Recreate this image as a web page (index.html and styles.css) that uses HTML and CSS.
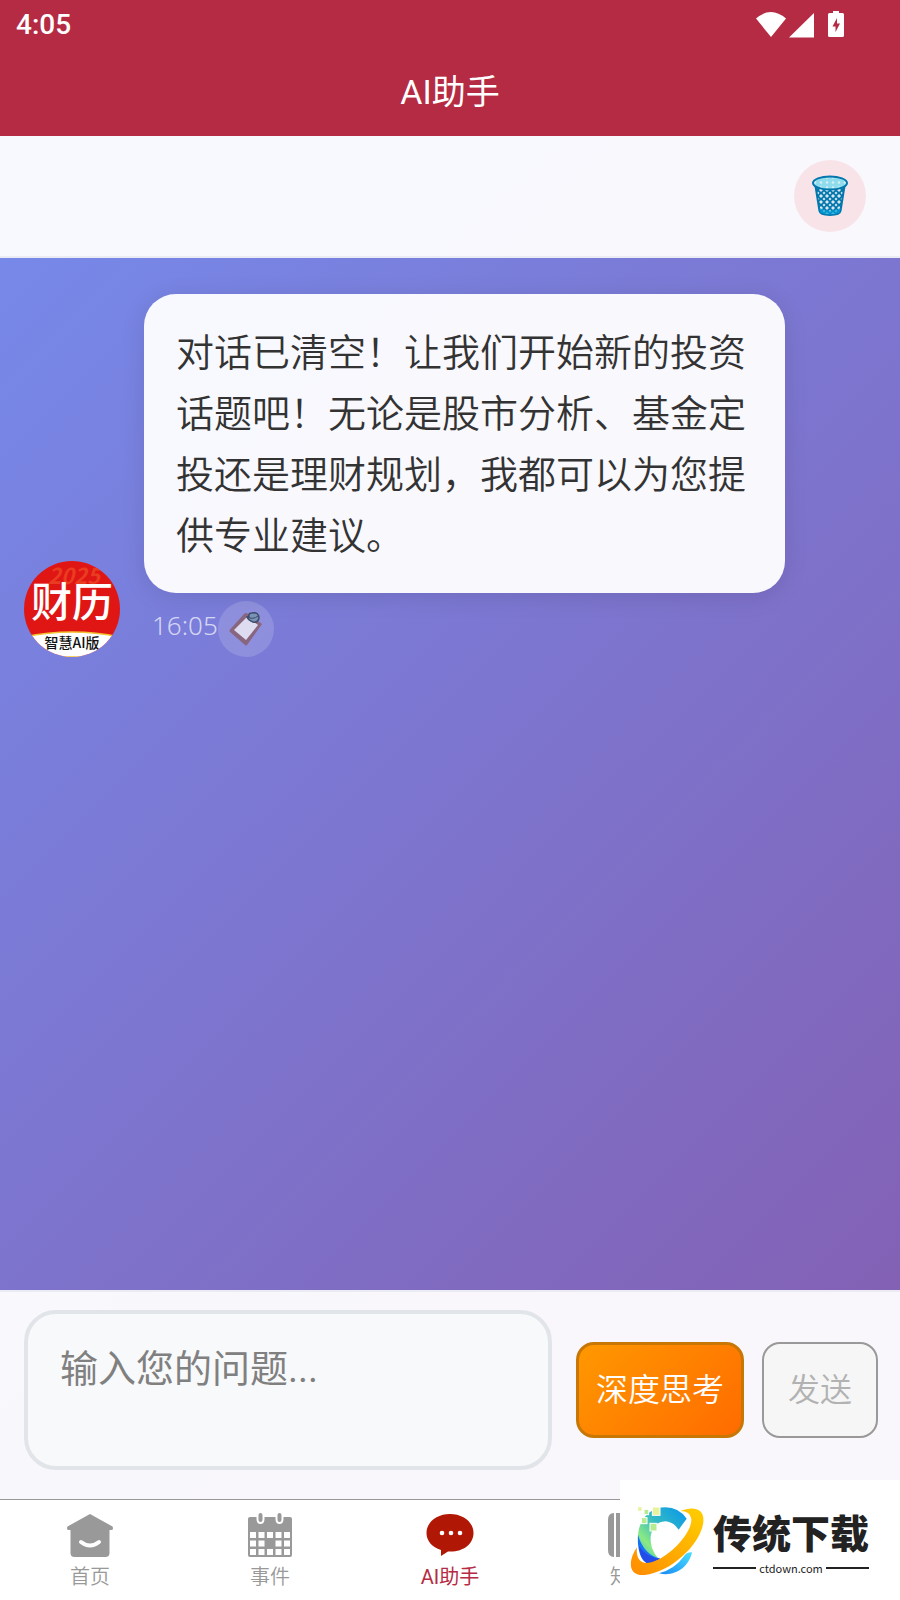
FILE: index.html
```html
<!DOCTYPE html>
<html lang="zh-CN">
<head>
  <meta charset="UTF-8">
  <meta name="viewport" content="width=device-width, initial-scale=1.0">
  <title>AI助手</title>
  <link rel="stylesheet" href="styles.css">
</head>
<body>

  <header class="header">
    <div class="status-bar">
      <span>4:05</span>
      <svg class="status-icons" width="90" height="28" viewBox="0 0 90 28" fill="#fff">
        <path d="M0 7.500Q15-5.500 30 7.500L15 26Z"/>
        <path d="M33 26.500L58 2V26.500Z"/>
        <path fill-rule="evenodd" d="M77 0h6v2h3.500q1.500 0 1.500 1.500v21q0 1.500-1.500 1.500h-13q-1.500 0-1.500-1.500v-21q0-1.500 1.500-1.500H77ZM81 7l-4.500 8.500h3V21l4.500-8.500h-3Z"/>
      </svg>
    </div>
    <h1 class="title">AI助手</h1>
  </header>

  <main class="page">
    <div class="toolbar">
      <button type="button" class="clear-button" aria-label="清空对话">
        <svg width="36" height="42" viewBox="0 0 36 42">
          <defs>
            <pattern id="mesh" width="6" height="6" patternUnits="userSpaceOnUse">
              <rect width="6" height="6" fill="#0277ad"/>
              <path d="M3 1L5 3L3 5L1 3Z" fill="#d9e6ee"/>
              <path d="M0-1.500L1.500 0L0 1.500ZM6-1.500V1.500L4.500 0ZM0 4.500L1.500 6L0 7.500ZM6 4.500V7.500L4.500 6Z" fill="#d9e6ee"/>
            </pattern>
            <pattern id="rim" width="6" height="5" patternUnits="userSpaceOnUse">
              <rect width="6" height="5" fill="#8fdcec"/>
              <circle cx="3" cy="2.500" r="1.300" fill="#d5eff4"/>
            </pattern>
          </defs>
          <path d="M3.500 11L7.500 36Q8 40 18 40Q28 40 28.500 36L32.500 11Z" fill="url(#mesh)" stroke="#0277ad" stroke-width="2"/>
          <path d="M7.500 33Q18 38 28.500 33L28 37Q25 39.500 18 39.500Q11 39.500 8 37Z" fill="#00a0da" opacity=".7"/>
          <ellipse cx="18" cy="8" rx="17" ry="6.500" fill="url(#rim)" stroke="#0277ad" stroke-width="2"/>
        </svg>
      </button>
    </div>

    <section class="chat">
      <article class="message">
        <svg class="avatar" viewBox="0 0 96 96">
          <clipPath id="round"><circle cx="48" cy="48" r="48"/></clipPath>
          <g clip-path="url(#round)">
            <rect width="96" height="96" fill="#e01615"/>
            <text x="50" y="23" class="avatar-year">2025</text>
            <path d="M0 76Q48 66 96 76V96H0Z" fill="#fff" stroke="#f2c230" stroke-width="1.500"/>
            <text x="48" y="56" class="avatar-name">财历</text>
            <text x="48" y="87" class="avatar-note">智慧AI版</text>
          </g>
        </svg>
        <div class="message-body">
          <p class="bubble">对话已清空！让我们开始新的投资话题吧！无论是股市分析、基金定投还是理财规划，我都可以为您提供专业建议。</p>
          <div class="meta">
            <time>16:05</time>
            <button type="button" class="copy-button" aria-label="复制">
              <svg width="34" height="34" viewBox="0 0 34 34">
                <path d="M17.500 1L33 12L18 33Q17 34 16 33L1 20Q0 19 1 17.500L15 2Q16 1 17.500 1Z" fill="#88667f"/>
                <path d="M18 5L29 13L17 28L5 18Z" fill="#dedcf1"/>
                <path d="M20 5Q19 1 23 1Q30 0 30 6Q29 11 24 10Q19 8 18 5Z" fill="#7893b5" stroke="#3e4b6a" stroke-width="1.500"/>
                <path d="M18 5Q24 8 29 4" fill="none" stroke="#3e4b6a"/>
              </svg>
            </button>
          </div>
        </div>
      </article>
    </section>

    <form class="composer">
      <textarea class="question" aria-label="输入您的问题" placeholder="输入您的问题..."></textarea>
      <button type="button" class="button think-button">深度思考</button>
      <button type="button" class="button send-button" disabled>发送</button>
    </form>
  </main>

  <nav class="tabs">
    <a href="#" class="tab">
      <svg width="48" height="48" viewBox="0 0 48 48">
        <path d="M24 3L46.500 15.500Q48 19 45 19H43.500V42Q43.500 46 39.500 46H8.500Q4.500 46 4.500 42V19H3Q0 19 1.500 15.500Z" fill="#999"/>
        <path d="M15 31Q24 38 33 31" fill="none" stroke="#fff" stroke-width="4" stroke-linecap="round"/>
      </svg>
      首页
    </a>
    <a href="#" class="tab">
      <svg width="48" height="48" viewBox="0 0 48 48">
        <path d="M4 6H44Q46 6 46 8V44Q46 46 44 46H4Q2 46 2 44V8Q2 6 4 6Z" fill="#999"/>
        <path d="M10.500 5V8Q10.500 13 14.500 13Q18.500 13 18.500 8V5ZM29.500 5V8Q29.500 13 33.500 13Q37.500 13 37.500 8V5Z" fill="#fff"/>
        <path d="M14.500 4V9M33.500 4V9" stroke="#999" stroke-width="4" stroke-linecap="round"/>
        <path d="M4 21h6v6H4zM12.500 21h6v6h-6zM21 21h6v6h-6zM29.500 21h6v6h-6zM38 21h6v6h-6zM4 29.500h6v6H4zM12.500 29.500h6v6h-6zM29.500 29.500h6v6h-6zM38 29.500h6v6h-6zM4 38h6v6H4zM12.500 38h6v6h-6zM21 38h6v6h-6zM29.500 38h6v6h-6zM38 38h6v6h-6z" fill="#fff"/>
      </svg>
      事件
    </a>
    <a href="#" class="tab tab-active">
      <svg width="48" height="48" viewBox="0 0 48 48">
        <path d="M24 3C37 3 47.500 11 47.500 22C47.500 33 37 41.500 22 40.500L15 45V39C6 36 .5 30 .5 22C.5 11 11 3 24 3Z" fill="#b01805"/>
        <g fill="#fff"><circle cx="16" cy="22" r="2.300"/><circle cx="25" cy="22" r="2.300"/><circle cx="34" cy="22" r="2.300"/></g>
      </svg>
      AI助手
    </a>
    <a href="#" class="tab">
      <svg width="48" height="48" viewBox="0 0 48 48" fill="#999">
        <path d="M8 2V46Q2 46 2 39V9Q2 2 8 2ZM10 2H46V46H10Z"/>
        <path d="M9 2V46" stroke="#fff" stroke-width="2"/>
      </svg>
      知识
    </a>
    <span class="tab"></span>
  </nav>

  <aside class="watermark">
    <svg width="80" height="75" viewBox="50 95 240 225">
      <defs>
        <linearGradient id="gold" x1="1" y1="0" x2="0" y2="1"><stop stop-color="#ffcf00"/><stop offset="1" stop-color="#ff8b00"/></linearGradient>
        <linearGradient id="arc" x1="1" y1="0" x2="0" y2="1"><stop stop-color="#0795ed"/><stop offset=".45" stop-color="#32bac4"/><stop offset=".75" stop-color="#8bea82"/><stop offset="1" stop-color="#35b7d8"/></linearGradient>
        <linearGradient id="sea" x1="0" y1="1" x2="1" y2="0"><stop stop-color="#1a8af5"/><stop offset="1" stop-color="#48dfff"/></linearGradient>
      </defs>
      <path d="M229 142Q205 108 165 108C115 108 82 150 83 200C84 235 105 270 148 264C105 225 115 152 165 150Q190 152 205 175Z" fill="url(#arc)"/>
      <path d="M83 190C80 235 92 275 118 277L150 262Q100 250 83 190Z" fill="#1672f5"/>
      <path d="M86 225Q92 275 118 277L150 262Q110 260 86 225Z" fill="#244be8"/>
      <path d="M146 306Q195 293 223 252Q230 242 245 243C235 290 190 318 146 306Z" fill="url(#sea)"/>
      <path d="M210 119C250 103 283 112 279 152C273 216 184 302 103 311C48 315 56 262 80 228C76 262 91 285 132 270C190 248 247 177 243 142Q240 120 210 119Z" fill="url(#gold)"/>
      <g stroke="#fff" stroke-width="3">
        <rect x="82" y="106" width="13" height="14" fill="#e7f39b"/>
        <rect x="101" y="114" width="14" height="16" fill="#b5eb91"/>
        <rect x="126" y="107" width="23" height="25" fill="#e7f39b"/>
        <rect x="93" y="139" width="17" height="18" fill="#b5eb91"/>
        <rect x="119" y="156" width="21" height="23" fill="#b5eb91"/>
      </g>
    </svg>
    <div class="watermark-text">
      <strong>传统下载</strong>
      <span class="watermark-site">ctdown.com</span>
    </div>
  </aside>

</body>
</html>
```
FILE: styles.css
```css
* {
  box-sizing: border-box;
}
body {
  margin: 0;
  min-height: 100vh;
  display: flex;
  flex-direction: column;
  position: relative;
  font-family: Roboto, "Noto Sans CJK SC", sans-serif;
}
button, textarea {
  font-family: inherit;
}
button {
  cursor: pointer;
}
.header {
  background: #b52b43;
  color: #fff;
}
.status-bar {
  height: 48px;
  padding: 1px 54px 0 16px;
  display: flex;
  align-items: center;
  justify-content: space-between;
  font-size: 28px;
  font-weight: 500;
}
.title {
  margin: 0;
  font-size: 34px;
  line-height: 88px;
  font-weight: 400;
  text-align: center;
}
.page {
  flex: 1;
  display: flex;
  flex-direction: column;
  background: linear-gradient(135deg, #768bec 0%, #845daf 100%);
}
.toolbar {
  display: flex;
  justify-content: flex-end;
  padding: 24px 34px;
  background: rgba(255, 255, 255, 0.95);
  border-bottom: 2px solid #ebebf3;
}
.clear-button {
  width: 72px;
  height: 72px;
  padding: 0;
  border: none;
  border-radius: 50%;
  background: #f8e3e8;
  display: flex;
  align-items: center;
  justify-content: center;
}
.chat {
  flex: 1;
  padding: 36px 24px;
}
.message {
  display: flex;
  align-items: flex-end;
  gap: 24px;
  padding-right: 91px;
}
.avatar {
  width: 96px;
  height: 96px;
  flex-shrink: 0;
}
.avatar text {
  text-anchor: middle;
  font-family: "Noto Sans CJK SC", sans-serif;
}
.avatar .avatar-year {
  font-size: 22px;
  font-weight: 700;
  font-style: italic;
  fill: #e93c20;
}
.avatar .avatar-name {
  font-size: 41px;
  font-weight: 500;
  fill: #fff;
}
.avatar .avatar-note {
  font-size: 14px;
  font-weight: 500;
  fill: #111;
}
.message-body {
  flex: 1;
}
.bubble {
  margin: 0;
  padding: 25px 32px 30px;
  border-radius: 32px;
  background: rgba(255, 255, 255, 0.95);
  box-shadow: 0 4px 24px rgba(0, 0, 0, 0.1);
  color: #333;
  font-family: "Noto Sans CJK SC", sans-serif;
  font-size: 38px;
  font-weight: 350;
  line-height: 61px;
}
.meta {
  display: flex;
  margin-top: 8px;
  padding-left: 8px;
  color: rgba(255, 255, 255, 0.7);
  font-family: "Noto Sans", sans-serif;
  font-size: 26px;
  font-weight: 350;
  line-height: 48px;
}
.copy-button {
  width: 56px;
  height: 56px;
  padding: 0;
  border: none;
  border-radius: 50%;
  background: rgba(255, 255, 255, 0.15);
  display: flex;
  align-items: center;
  justify-content: center;
}
.composer {
  display: flex;
  align-items: center;
  gap: 18px;
  padding: 18px 22px 29px 24px;
  background: rgba(255, 255, 255, 0.95);
  border-top: 2px solid #ebebf3;
}
.question {
  flex: 1;
  min-width: 0;
  height: 160px;
  margin-right: 6px;
  padding: 25px 32px;
  border: 4px solid #e1e5e9;
  border-radius: 32px;
  background: #f8f9fb;
  color: #333;
  font-size: 38px;
  line-height: 61px;
  resize: none;
}
.question::placeholder {
  color: #808080;
}
.button {
  height: 96px;
  padding: 0 0 6px;
  border-radius: 18px;
  font-size: 32px;
  font-weight: 350;
}
.think-button {
  width: 168px;
  border: 3px solid #c87604;
  background: linear-gradient(135deg, #ff9800, #ff6b00);
  color: #fff;
}
.send-button {
  width: 116px;
  border: 2px solid #999;
  background: #f6f6f6;
  color: #b2b2b2;
}
.tabs {
  display: flex;
  height: 101px;
  border-top: 1px solid #999;
  background: #fff;
}
.tab {
  flex: 1;
  display: flex;
  flex-direction: column;
  align-items: center;
  padding-top: 11px;
  color: #999;
  font-size: 20px;
  font-weight: 350;
  line-height: 36px;
  text-decoration: none;
}
.tab-active {
  color: #b52b43;
  font-weight: 400;
}
.watermark {
  position: absolute;
  right: 0;
  bottom: 0;
  width: 280px;
  height: 120px;
  padding-left: 7px;
  display: flex;
  align-items: center;
  gap: 6px;
  background: #fff;
  color: #222;
  font-family: "Noto Sans CJK SC", sans-serif;
}
.watermark-text {
  width: 156px;
  padding-top: 2px;
}
.watermark-text strong {
  display: block;
  font-size: 39px;
  line-height: 54px;
  font-weight: 900;
}
.watermark-site {
  display: flex;
  align-items: center;
  gap: 3px;
  font-size: 11px;
  line-height: 20px;
  font-weight: 400;
}
.watermark-site::before, .watermark-site::after {
  content: "";
  flex: 1;
  height: 2px;
  background: #222;
}
```
